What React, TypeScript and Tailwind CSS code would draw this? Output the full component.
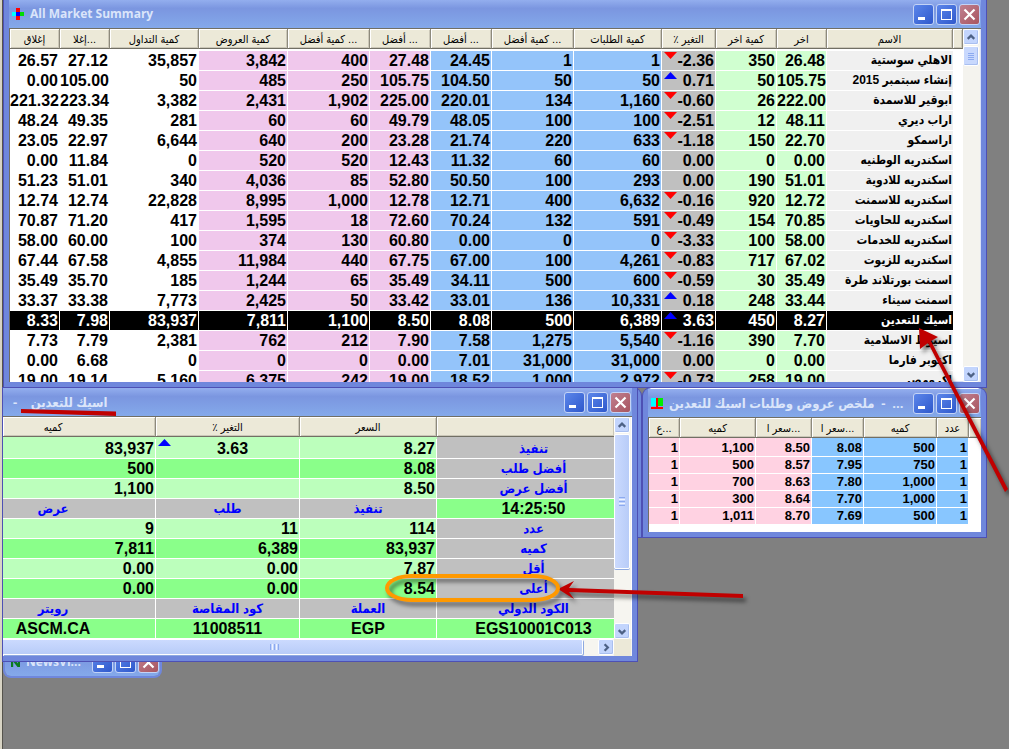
import React from "react";
import clsx from "clsx";

type Dir = "up" | "down" | "";

interface Quote {
  values: string[];
  dir: Dir;
  name: string;
}

const marketColumns = [
  { label: "إغلاق", width: "w-[50px]", color: "bg-white" },
  { label: "إغلا...", width: "w-[50px]", color: "bg-white" },
  { label: "كمية التداول", width: "w-[89px]", color: "bg-white" },
  { label: "كمية العروض", width: "w-[89px]", color: "bg-[#f0c8ec]" },
  { label: "كمية أفضل ...", width: "w-[82px]", color: "bg-[#f0c8ec]" },
  { label: "أفضل ...", width: "w-[61px]", color: "bg-[#f0c8ec]" },
  { label: "أفضل ...", width: "w-[61px]", color: "bg-[#94c4fa]" },
  { label: "كمية أفضل ...", width: "w-[82px]", color: "bg-[#94c4fa]" },
  { label: "كمية الطلبات", width: "w-[88px]", color: "bg-[#94c4fa]" },
  { label: "التغير ٪", width: "w-[54px]", color: "bg-[#c0c0c0]" },
  { label: "كمية اخر", width: "w-[61px]", color: "bg-[#d0ffd0]" },
  { label: "اخر", width: "w-[50px]", color: "bg-[#d0ffd0]" },
];

const CHANGE = 9;
const SELECTED = 13;

const quotes: Quote[] = [
  { values: ["26.57", "27.12", "35,857", "3,842", "400", "27.48", "24.45", "1", "1", "-2.36", "350", "26.48"], dir: "down", name: "الاهلي سوستية" },
  { values: ["0.00", "105.00", "50", "485", "250", "105.75", "104.50", "50", "50", "0.71", "50", "105.75"], dir: "up", name: "إنشاء سبتمبر 2015" },
  { values: ["221.32", "223.34", "3,382", "2,431", "1,902", "225.00", "220.01", "134", "1,160", "-0.60", "26", "222.00"], dir: "down", name: "ابوقير للاسمدة" },
  { values: ["48.24", "49.35", "281", "60", "60", "49.79", "48.05", "100", "100", "-2.51", "12", "48.11"], dir: "down", name: "اراب ديري" },
  { values: ["23.05", "22.97", "6,644", "640", "200", "23.28", "21.74", "220", "633", "-1.18", "150", "22.70"], dir: "down", name: "اراسمكو" },
  { values: ["0.00", "11.84", "0", "520", "520", "12.43", "11.32", "60", "60", "0.00", "0", "0.00"], dir: "", name: "اسكندريه الوطنيه" },
  { values: ["51.23", "51.01", "340", "4,036", "85", "52.80", "50.50", "100", "293", "0.00", "190", "51.01"], dir: "", name: "اسكندريه للادوية" },
  { values: ["12.74", "12.74", "22,828", "8,995", "1,000", "12.78", "12.71", "400", "6,632", "-0.16", "920", "12.72"], dir: "down", name: "اسكندريه للاسمنت" },
  { values: ["70.87", "71.20", "417", "1,595", "18", "72.60", "70.24", "132", "591", "-0.49", "154", "70.85"], dir: "down", name: "اسكندريه للحاويات" },
  { values: ["58.00", "60.00", "100", "374", "130", "60.80", "0.00", "0", "0", "-3.33", "100", "58.00"], dir: "down", name: "اسكندريه للخدمات" },
  { values: ["67.44", "67.58", "4,855", "11,984", "440", "67.75", "67.00", "100", "4,261", "-0.83", "717", "67.02"], dir: "down", name: "اسكندريه للزيوت" },
  { values: ["35.49", "35.70", "185", "1,244", "65", "35.49", "34.11", "500", "600", "-0.59", "30", "35.49"], dir: "down", name: "اسمنت بورتلاند طرة" },
  { values: ["33.37", "33.38", "7,773", "2,425", "50", "33.42", "33.01", "136", "10,331", "0.18", "248", "33.44"], dir: "up", name: "اسمنت سيناء" },
  { values: ["8.33", "7.98", "83,937", "7,811", "1,100", "8.50", "8.08", "500", "6,389", "3.63", "450", "8.27"], dir: "up", name: "اسيك للتعدين" },
  { values: ["7.73", "7.79", "2,381", "762", "212", "7.90", "7.58", "1,275", "5,540", "-1.16", "390", "7.70"], dir: "down", name: "اسيوط الاسلامية" },
  { values: ["0.00", "6.68", "0", "0", "0", "0.00", "7.01", "31,000", "31,000", "0.00", "0", "0.00"], dir: "", name: "اكتوبر فارما" },
  { values: ["19.00", "19.14", "5,160", "6,375", "242", "19.00", "18.52", "1,000", "2,972", "-0.73", "258", "19.00"], dir: "down", name: "اكرومصر" },
];

const depthColumns = [
  { label: "ع...", width: "w-[31px]", color: "bg-[#ffd2e2]" },
  { label: "كميه", width: "", color: "bg-[#ffd2e2]" },
  { label: "سعر ا...", width: "w-[56px]", color: "bg-[#ffd2e2]" },
  { label: "سعر ا...", width: "w-[52px]", color: "bg-[#88c6ff]" },
  { label: "كميه", width: "w-[73px]", color: "bg-[#88c6ff]" },
  { label: "عدد", width: "w-[32px]", color: "bg-[#88c6ff]" },
];

const depth = [
  ["1", "1,100", "8.50", "8.08", "500", "1"],
  ["1", "500", "8.57", "7.95", "750", "1"],
  ["1", "700", "8.63", "7.80", "1,000", "1"],
  ["1", "300", "8.64", "7.70", "1,000", "1"],
  ["1", "1,011", "8.70", "7.69", "500", "1"],
];

// kind: n = numbers, h = captions, c = centered codes
const detailRows = [
  { kind: "n", cells: ["83,937", "3.63", "8.27"], label: "تنفيذ" },
  { kind: "n", cells: ["500", "", "8.08"], label: "أفضل طلب" },
  { kind: "n", cells: ["1,100", "", "8.50"], label: "أفضل عرض" },
  { kind: "h", cells: ["عرض", "طلب", "تنفيذ"], label: "14:25:50" },
  { kind: "n", cells: ["9", "11", "114"], label: "عدد" },
  { kind: "n", cells: ["7,811", "6,389", "83,937"], label: "كميه" },
  { kind: "n", cells: ["0.00", "0.00", "7.87"], label: "أقل" },
  { kind: "n", cells: ["0.00", "0.00", "8.54"], label: "أعلى" },
  { kind: "h", cells: ["رويتر", "كود المقاصة", "العملة"], label: "الكود الدولي" },
  { kind: "c", cells: ["ASCM.CA", "11008511", "EGP"], label: "EGS10001C013" },
];

const headCell =
  "h-[20px] overflow-hidden whitespace-nowrap border-b border-r border-b-[#716f64] border-r-[#8d8a7c] bg-[#ece9d8] p-0 text-center text-[11px] font-normal leading-4 shadow-[inset_1px_1px_0_#ffffff,inset_-1px_-1px_0_#cbc7b8]";

function Arrow({ dir }: { dir: Dir }) {
  if (!dir) return <span />;
  return (
    <svg width="13" height="7" viewBox="0 0 13 7" className="shrink-0">
      <path d={dir === "up" ? "M6.5 0L13 7H0Z" : "M0 0H13L6.5 7Z"} fill={dir === "up" ? "#0000ff" : "#ff0000"} />
    </svg>
  );
}

function WindowButtons() {
  const base = "flex size-[21px] items-center justify-center rounded-[3px] border border-[#c3d3f6]";
  return (
    <div className="flex shrink-0 gap-0.5">
      <button aria-label="Minimize" className={clsx(base, "bg-linear-to-br from-[#5c86ea] to-[#2f58cc]")}>
        <svg width="19" height="19" viewBox="0 0 19 19"><path d="M4 12h7v3H4z" fill="#fff" /></svg>
      </button>
      <button aria-label="Maximize" className={clsx(base, "bg-linear-to-br from-[#5c86ea] to-[#2f58cc]")}>
        <svg width="19" height="19" viewBox="0 0 19 19"><path d="M4 4h11v11H4zM5 6v8h9V6z" fill="#fff" fillRule="evenodd" /></svg>
      </button>
      <button aria-label="Close" className={clsx(base, "bg-linear-to-br from-[#c08090] to-[#a85560]")}>
        <svg width="19" height="19" viewBox="0 0 19 19"><path d="M4.500 4.500l10 10M14.500 4.500l-10 10" stroke="#fff" strokeWidth="2.2" /></svg>
      </button>
    </div>
  );
}

function ScrollButton({ to }: { to: "up" | "down" | "right" }) {
  const paths = {
    up: "M4 9l3.5-3.5L11 9",
    down: "M4 6l3.5 3.5L11 6",
    right: "M6 4l3.5 3.5L6 11",
  };
  return (
    <button aria-label={"Scroll " + to} className="flex size-4 shrink-0 items-center justify-center rounded-[2px] border border-white bg-[#c3d5fd] shadow-[inset_-1px_-1px_0_#a9bff0]">
      <svg width="15" height="15" viewBox="0 0 15 15"><path d={paths[to]} fill="none" stroke="#4d6185" strokeWidth="2.4" /></svg>
    </button>
  );
}

function TitleBar({ icon, children }: { icon?: React.ReactNode; children: React.ReactNode }) {
  return (
    <div className="flex h-7 shrink-0 items-center gap-1.5 bg-linear-to-b from-[#93aeee] via-[#7b96e0] via-30% to-[#84a9ea] pr-px font-['Open_Sans','DejaVu_Sans_Condensed','DejaVu_Sans',sans-serif] font-bold text-[#dbe5fa]">
      {icon}
      <h2 className="min-w-0 flex-1 overflow-hidden whitespace-pre text-[12px] leading-5">{children}</h2>
      <WindowButtons />
    </div>
  );
}

function MarketWindow() {
  return (
    <section className="absolute left-1 right-[23px] top-0 flex h-[387px] flex-col border-x-[5px] border-b-[5px] border-[#6f87dc] bg-white shadow-[inset_0_0_0_1px_#d8e0f8,0_0_0_1px_#4d50b4]">
      <TitleBar
        icon={
          <svg width="12" height="12" viewBox="0 0 12 12" className="ml-[3px]">
            <path d="M4 0h4v12H4z" fill="#f00" />
            <path d="M0 4h4v4H0z" fill="#0ff" />
            <path d="M4 4h4v4H4z" fill="#00f" />
            <path d="M8 4h4v4H8z" fill="#0d0" />
          </svg>
        }
      >
        All Market Summary
      </TitleBar>
      <div className="flex min-h-0 flex-1 border-l border-t border-[#716f64] pr-px">
        <div className="min-w-0 flex-1 overflow-hidden">
          <table className="w-full table-fixed border-separate border-spacing-0">
            <thead>
              <tr>
                {marketColumns.map((c, i) => (
                  <th key={i} className={clsx(headCell, c.width)}>
                    <span dir={i === CHANGE ? "rtl" : "ltr"}>{c.label}</span>
                  </th>
                ))}
                <th className={headCell}>الاسم</th>
                <th className={clsx(headCell, "w-[10px]")} />
              </tr>
              <tr><td className="h-0.5 p-0" /></tr>
            </thead>
            <tbody>
              {quotes.map((q, r) => (
                <tr key={r} className={r === SELECTED ? "text-white" : "text-black"}>
                  {q.values.map((v, i) => (
                    <td
                      key={i}
                      className={clsx(
                        "h-5 whitespace-nowrap border-b border-r border-white p-0 pr-px text-right text-[16px] font-bold leading-[19px]",
                        r === SELECTED ? "bg-black" : marketColumns[i].color
                      )}
                    >
                      {i === CHANGE ? (
                        <div className="flex h-[19px] justify-between pl-0.5">
                          <div className="flex items-start pt-px"><Arrow dir={q.dir} /></div>
                          {v}
                        </div>
                      ) : (
                        v
                      )}
                    </td>
                  ))}
                  <td
                    dir="rtl"
                    className={clsx(
                      "h-5 whitespace-nowrap border-b border-white p-0 pr-px text-right text-[12px] font-bold leading-[19px]",
                      r === SELECTED ? "bg-black" : "bg-[#f0f0f0]"
                    )}
                  >
                    {q.name}
                  </td>
                  <td className="p-0" />
                </tr>
              ))}
            </tbody>
          </table>
        </div>
        <div className="flex w-[17px] shrink-0 flex-col bg-[#f4f3ee]">
          <ScrollButton to="up" />
          <div className="mt-px flex h-5 w-4 flex-col items-center justify-center gap-px rounded-[2px] border border-white bg-[#c8d8fd] shadow-[inset_-1px_-1px_0_#a9bff0]">
            <span className="h-px w-1.5 bg-[#8caaf0]" />
            <span className="h-px w-1.5 bg-[#8caaf0]" />
            <span className="h-px w-1.5 bg-[#8caaf0]" />
            <span className="h-px w-1.5 bg-[#8caaf0]" />
          </div>
          <div className="flex-1" />
          <ScrollButton to="down" />
        </div>
      </div>
    </section>
  );
}

function DepthWindow() {
  return (
    <section className="absolute left-[643px] right-[23px] top-[388px] flex h-[149px] flex-col rounded-t-lg border-x-[5px] border-b-[5px] border-[#6f87dc] bg-white shadow-[0_0_0_1px_#4d50b4]">
      <div className="pt-px">
        <TitleBar
          icon={
            <svg width="12" height="11" viewBox="0 0 12 11" className="ml-[3px]">
              <path d="M0 0h5v8H0z" fill="#0ff" />
              <path d="M7 0h5v8H7z" fill="#0e0" />
              <path d="M5 0h2v9h5v2H0V9h5z" fill="#f00" />
            </svg>
          }
        >
          <span className="text-[13px]">ملخص عروض وطلبات اسيك للتعدين  -  ...</span>
        </TitleBar>
      </div>
      <div className="flex-1 border-l border-t border-[#716f64]">
        <div className="flex">
          <table className="min-w-0 flex-1 table-fixed border-separate border-spacing-0 bg-white">
            <thead>
              <tr>
                {depthColumns.map((c, i) => (
                  <th key={i} className={clsx(headCell, c.width)}>{c.label}</th>
                ))}
              </tr>
              <tr>
                {depthColumns.map((c, i) => (
                  <td key={i} className={clsx("h-0.5 border-r border-white p-0", c.color)} />
                ))}
              </tr>
            </thead>
            <tbody>
              {depth.map((row, r) => (
                <tr key={r}>
                  {row.map((v, i) => (
                    <td key={i} className={clsx("h-[17px] border-b border-r border-white p-0 pr-px text-right text-[13px] font-bold leading-4", depthColumns[i].color)}>
                      {v}
                    </td>
                  ))}
                </tr>
              ))}
            </tbody>
          </table>
          <div className="w-3 bg-white"><div className={clsx(headCell, "border-r-0")} /></div>
        </div>
      </div>
    </section>
  );
}

function DetailWindow() {
  return (
    <section className="absolute left-[3px] right-[372px] top-[388px] flex flex-col border-b-[5px] border-r-[5px] border-[#6f87dc] bg-white shadow-[0_0_0_1px_#4d50b4]">
      <TitleBar>
        <span className="pl-2.5 text-[13px]">-    اسيك للتعدين</span>
      </TitleBar>
      <div className="flex border-t border-[#716f64] pr-px">
        <div className="min-w-0 flex-1 overflow-hidden">
          <table className="w-full table-fixed border-separate border-spacing-0">
            <thead>
              <tr>
                <th className={clsx(headCell, "w-[153px] pr-13")}>كميه</th>
                <th className={clsx(headCell, "w-[144px]")}><span dir="rtl">التغير ٪</span></th>
                <th className={clsx(headCell, "w-[137px]")}>السعر</th>
                <th className={clsx(headCell, "border-r-0")} />
              </tr>
              <tr>
                <td colSpan={3} className="h-0.5 bg-[#bcffbc] p-0" />
                <td className="h-0.5 bg-[#c0c0c0] p-0" />
              </tr>
            </thead>
            <tbody>
              {detailRows.map((row, r) => {
                const tone = row.kind === "h" ? "bg-[#c0c0c0]" : r % 2 ? "bg-[#8aff8a]" : "bg-[#bcffbc]";
                const isTime = r === 3;
                return (
                  <tr key={r}>
                    {row.cells.map((v, i) => (
                      <td
                        key={i}
                        className={clsx(
                          "h-5 whitespace-nowrap border-b border-r border-white p-0 font-bold leading-[19px]",
                          tone,
                          row.kind === "n" ? "pr-px text-right" : "text-center",
                          row.kind === "h" ? "text-[13px] text-[#0000ff]" : "text-[16px]",
                          row.kind !== "n" && i === 0 && "pr-13"
                        )}
                      >
                        {r === 0 && i === 1 ? (
                          <div className="flex h-[19px] pl-0.5">
                            <div className="flex items-start"><Arrow dir="up" /></div>
                            <span className="flex-1 pr-1 text-center">{v}</span>
                          </div>
                        ) : (
                          v
                        )}
                      </td>
                    ))}
                    <td
                      className={clsx(
                        "h-5 whitespace-nowrap border-b border-white p-0 pl-4 text-center font-bold leading-[19px]",
                        isTime || row.kind === "c" ? "bg-[#8aff8a] text-[16px]" : "bg-[#c0c0c0] text-[13px] text-[#0000ff]"
                      )}
                    >
                      {row.label}
                    </td>
                  </tr>
                );
              })}
            </tbody>
          </table>
        </div>
        <div className="flex w-[17px] shrink-0 flex-col bg-[#f6f5f0]">
          <ScrollButton to="up" />
          <div className="mt-px flex h-[135px] w-4 flex-col items-center justify-center gap-px rounded-[2px] border border-white bg-linear-to-r from-[#cbdafe] to-[#b8ccf8] shadow-[0_1px_0_#8ea9e0]">
            <span className="h-px w-1.5 bg-[#8caaf0]" />
            <span className="h-px w-1.5 bg-[#eef3ff]" />
            <span className="h-px w-1.5 bg-[#8caaf0]" />
            <span className="h-px w-1.5 bg-[#eef3ff]" />
            <span className="h-px w-1.5 bg-[#8caaf0]" />
          </div>
          <div className="flex-1" />
          <ScrollButton to="down" />
        </div>
      </div>
      <div className="flex h-[17px] bg-[#f6f5f0] pr-px">
        <div className="flex h-4 flex-1 items-center justify-center gap-px rounded-r-[2px] border-y border-r border-white bg-linear-to-b from-[#cbdafe] to-[#b8ccf8] pr-9 shadow-[1px_1px_0_#8ea9e0]">
          <span className="h-1.5 w-px bg-[#8caaf0]" />
          <span className="h-1.5 w-px bg-[#eef3ff]" />
          <span className="h-1.5 w-px bg-[#8caaf0]" />
          <span className="h-1.5 w-px bg-[#eef3ff]" />
          <span className="h-1.5 w-px bg-[#8caaf0]" />
        </div>
        <div className="w-[15px]" />
        <ScrollButton to="right" />
        <div className="w-[17px] bg-[#ece9d8]" />
      </div>
    </section>
  );
}

function NewsWindow() {
  return (
    <section className="absolute left-[3px] top-[648px] w-[159px] overflow-hidden rounded-b-lg border-x-2 border-b-2 border-[#6f87dc]">
      <TitleBar
        icon={
          <svg width="9" height="9" viewBox="0 0 9 9" className="ml-1.5">
            <path d="M1 9V0l7 9V0" fill="none" stroke="#0a7a1e" strokeWidth="2.4" />
          </svg>
        }
      >
        NewsVi...
      </TitleBar>
    </section>
  );
}

// Frame of the window that is hidden under the detail window
function HiddenFrame() {
  return <div className="absolute left-[600px] top-[388px] h-[149px] w-[41px] rounded-tr-lg border-b-4 border-r-4 border-[#6f87dc] bg-white shadow-[0_0_0_1px_#4d50b4]" />;
}

function Annotations() {
  return (
    <svg className="pointer-events-none absolute left-0 top-0 h-[749px] w-[1009px]" viewBox="0 0 1009 749">
      <g className="drop-shadow-[3px_4px_2px_rgba(0,0,0,0.5)]">
        <path d="M919 328L938 337L931 341L1008 489L1005 492L928 343L920 349Z" fill="#c00000" />
        <path d="M558 589L574 581L569 588L743 594V598L569 592L574 599Z" fill="#c00000" />
        <rect x="387" y="576" width="171" height="24" rx="25" ry="12" fill="none" stroke="#ff9900" strokeWidth="4" />
      </g>
      <path d="M21 409L116 411.500V416L21 413Z" fill="#c00000" />
    </svg>
  );
}

export default function App() {
  return (
    <main className="relative h-screen min-h-[680px] overflow-hidden border-l-2 border-[#d8d4c4] bg-[#808080] font-['Liberation_Sans','DejaVu_Sans_Condensed','DejaVu_Sans',sans-serif] text-black">
      <div className="absolute inset-y-0 left-0 w-px bg-[#55534c]" />
      <div className="absolute inset-0 -left-0.5">
        <MarketWindow />
        <HiddenFrame />
        <DepthWindow />
        <NewsWindow />
        <DetailWindow />
        <Annotations />
      </div>
    </main>
  );
}
